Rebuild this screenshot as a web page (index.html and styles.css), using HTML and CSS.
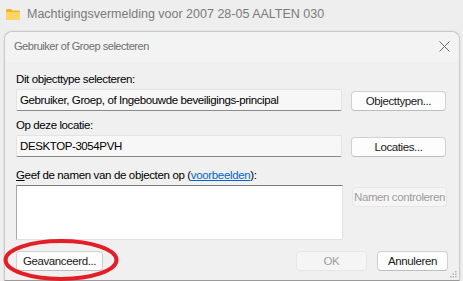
FILE: index.html
```html
<!DOCTYPE html>
<html lang="nl">

<head>
    <meta charset="UTF-8">
    <title>Gebruiker of Groep selecteren</title>
    <link rel="stylesheet" href="styles.css">
</head>

<body>
    <div class="parent-title">
        <svg class="folder" width="14" height="11" viewBox="0 0 14 11">
            <path d="M0 1.2 Q0 0 1.2 0 H5 L6.5 1.5 H12.8 Q14 1.5 14 2.7 V9.8 Q14 11 12.8 11 H1.2 Q0 11 0 9.8 Z" fill="#f0b429" />
            <path d="M0 3 H14 V9.8 Q14 11 12.8 11 H1.2 Q0 11 0 9.8 Z" fill="#ffd566" />
        </svg>
        <span>Machtigingsvermelding voor 2007 28-05 AALTEN 030</span>
    </div>

    <div class="dialog">
        <div class="dialog-head">
            <span class="dialog-title">Gebruiker of Groep selecteren</span>
            <svg class="close" width="11" height="11" viewBox="0 0 11 11">
                <path d="M0.5 0.5 L10.5 10.5 M10.5 0.5 L0.5 10.5" stroke="#6b6b6b" stroke-width="1" fill="none" />
            </svg>
        </div>

        <div class="dialog-body">
            <div class="label classic">Dit objecttype selecteren:</div>
            <div class="row row-end">
                <div class="field classic">Gebruiker, Groep, of Ingebouwde beveiligings-principal</div>
                <button class="btn classic">Objecttypen...</button>
            </div>

            <div class="label classic label-gap">Op deze locatie:</div>
            <div class="row row-end">
                <div class="field classic">DESKTOP-3054PVH</div>
                <button class="btn classic">Locaties...</button>
            </div>

            <div class="label names-label"><u>G</u>eef de namen van de objecten op (<a href="#">voorbeelden</a>):</div>
            <div class="row">
                <div class="names-box"></div>
                <button class="btn classic btn-disabled btn-check">Namen controleren</button>
            </div>

            <div class="footer">
                <button class="btn classic btn-advanced">Geavanceerd...</button>
                <div class="footer-right">
                    <button class="btn classic btn-disabled btn-ok">OK</button>
                    <button class="btn classic btn-cancel">Annuleren</button>
                </div>
            </div>
        </div>

        <svg class="grip" width="7" height="7" viewBox="0 0 7 7">
            <rect x="5" y="0" width="1.5" height="1.5" fill="#b5b5b5" />
            <rect x="2.5" y="2.5" width="1.5" height="1.5" fill="#b5b5b5" />
            <rect x="5" y="2.5" width="1.5" height="1.5" fill="#b5b5b5" />
            <rect x="0" y="5" width="1.5" height="1.5" fill="#b5b5b5" />
            <rect x="2.5" y="5" width="1.5" height="1.5" fill="#b5b5b5" />
            <rect x="5" y="5" width="1.5" height="1.5" fill="#b5b5b5" />
        </svg>
    </div>

    <!-- red marker drawn over the screenshot -->
    <svg class="marker" width="120" height="46" viewBox="0 0 120 46">
        <ellipse cx="61" cy="22" rx="55.5" ry="19" fill="none" stroke="#e41e26" stroke-width="4" />
    </svg>
</body>

</html>
```

FILE: styles.css
```css
body {
    margin: 0;
    width: 463px;
    height: 281px;
    overflow: hidden;
    background: #eeeeee;
    font-family: "Liberation Sans", Arial, sans-serif;
    position: relative;
}

.parent-title {
    height: 31px;
    display: flex;
    align-items: center;
    padding: 0 0 3px 6px;
    box-sizing: border-box;
    color: #7a7a7a;
    font-size: 12.5px;
}

.folder {
    margin-right: 7px;
}

.dialog {
    position: relative;
    margin: 0 3px 0 4px;
    height: 248px;
    border: 1px solid #c9c9c9;
    border-bottom-color: #9a9a9a;
    border-radius: 8px 8px 0 0;
    background: #f0f0f0;
    box-shadow: 0 0 3px rgba(0, 0, 0, 0.08);
}

.dialog-head {
    height: 30px;
    display: flex;
    align-items: center;
    justify-content: space-between;
    padding: 0 9px 2px 9px;
    box-sizing: border-box;
    background: #f3f3f3;
    border-radius: 8px 8px 0 0;
}

.dialog-title {
    font-size: 11px;
    letter-spacing: -0.45px;
    color: #6e6e6e;
}

.dialog-body {
    padding: 10px 11px 0 11px;
}

.classic {
    font-size: 11.5px;
    letter-spacing: -0.4px;
}

.label {
    height: 14px;
    line-height: 14px;
    color: #000;
    margin-bottom: 3px;
}

.label-gap {
    margin-top: 7px;
}

.names-label {
    margin-top: 11px;
    font-size: 11.5px;
    letter-spacing: -0.35px;
}

.names-label a {
    color: #0066cc;
}

.row {
    display: flex;
    gap: 9px;
}

.row-end {
    align-items: flex-end;
}

.field {
    width: 326px;
    height: 22px;
    box-sizing: border-box;
    padding-left: 3px;
    line-height: 20px;
    background: #f7f7f7;
    border: 1px solid #e3e3e3;
    border-bottom-color: #8a8a8a;
    border-radius: 2px;
    color: #000;
}

.btn {
    width: 95px;
    height: 20px;
    padding: 0;
    background: #fdfdfd;
    border: 1px solid #d0d0d0;
    border-bottom-color: #bdbdbd;
    border-radius: 4px;
    color: #1a1a1a;
    font-family: "Liberation Sans", Arial, sans-serif;
}

.btn-disabled {
    background: #f5f5f5;
    border-color: #e6e6e6;
    color: #9d9d9d;
}

.btn-check {
    margin-top: 2px;
}

.names-box {
    width: 327px;
    height: 55px;
    box-sizing: border-box;
    background: #ffffff;
    border: 1px solid #e0e0e0;
    border-top-color: #7a7a7a;
    border-left-color: #a9a9a9;
}

.footer {
    margin-top: 11px;
    display: flex;
    justify-content: space-between;
}

.btn-advanced {
    width: 87px;
}

.footer-right {
    display: flex;
    gap: 10px;
}

.btn-ok {
    width: 71px;
}

.btn-cancel {
    width: 71px;
}

.grip {
    position: absolute;
    right: 2px;
    bottom: 2px;
}

.marker {
    position: absolute;
    left: 0;
    top: 238px;
}
```
